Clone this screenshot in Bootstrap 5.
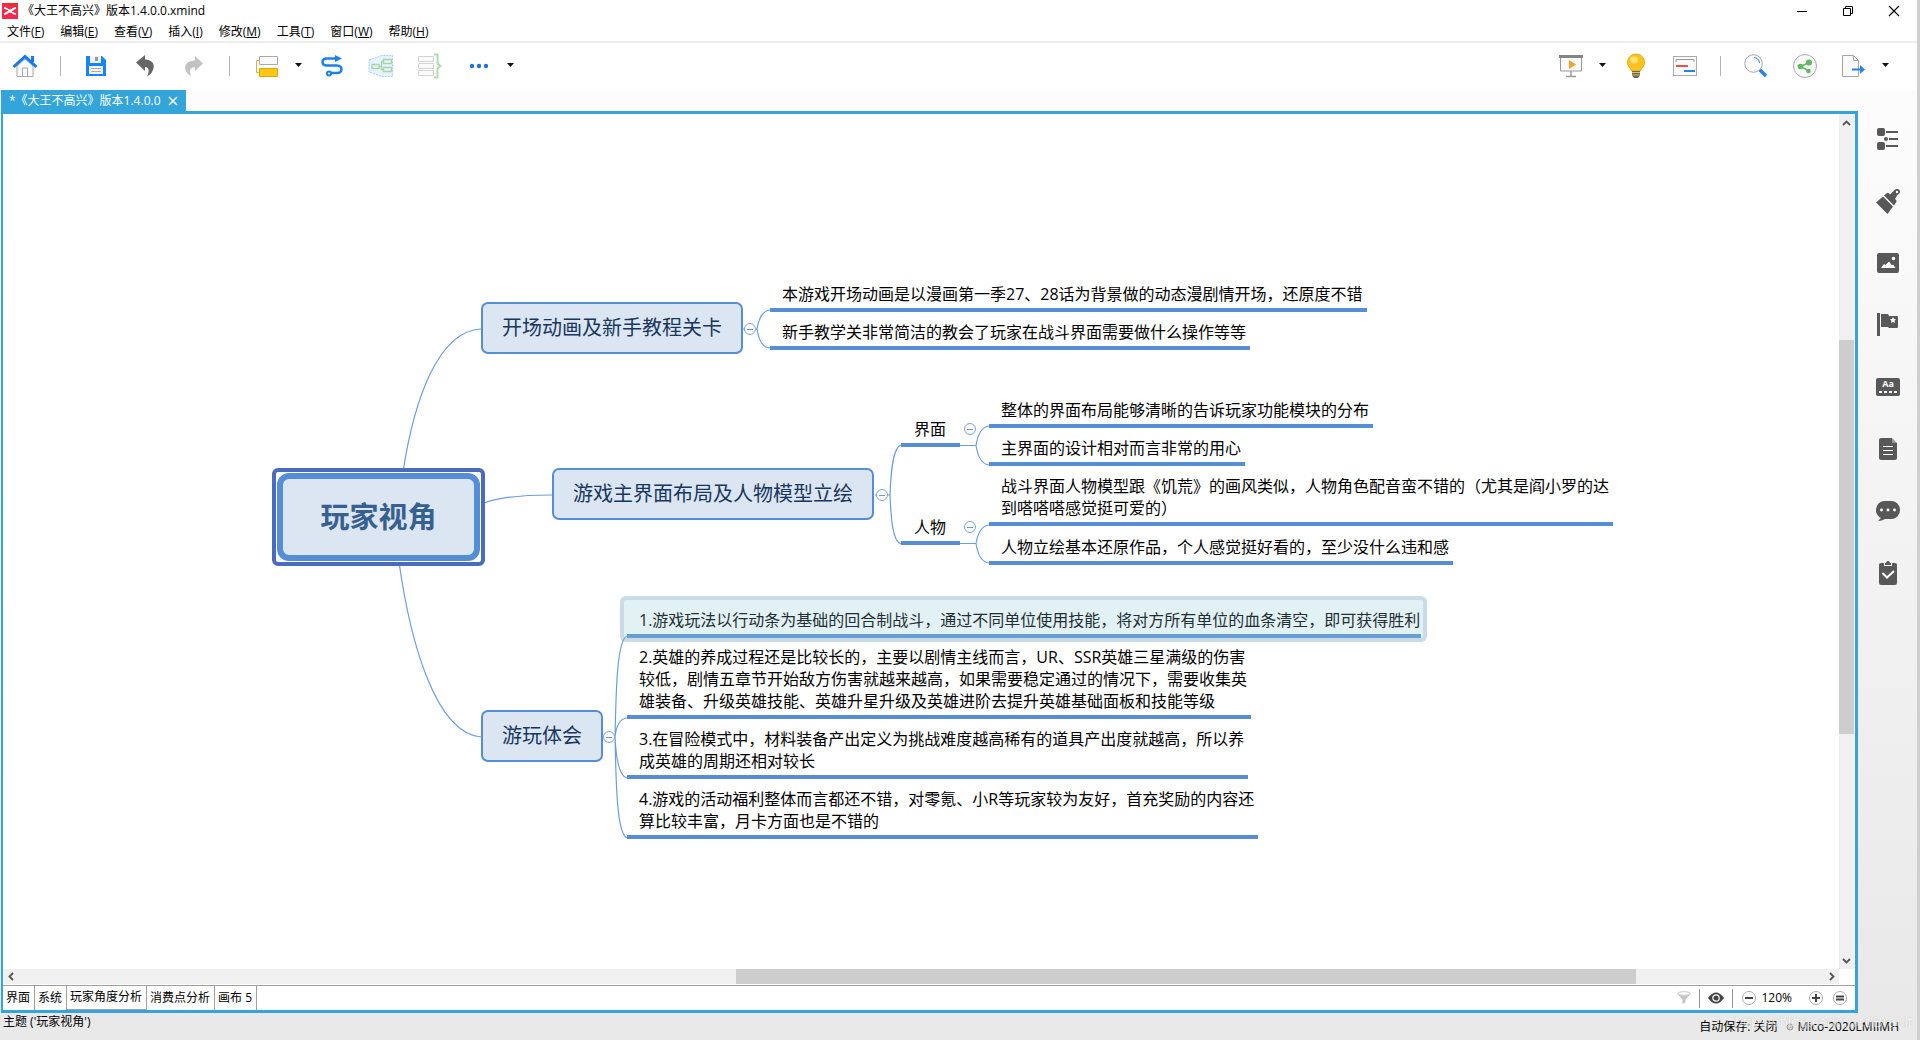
<!DOCTYPE html>
<html lang="zh-CN">
<head>
<meta charset="utf-8">
<meta name="viewport" content="width=device-width, initial-scale=1">
<title>《大王不高兴》版本1.4.0.0.xmind</title>
<link href="https://cdn.jsdelivr.net/npm/bootstrap@5.3.0/dist/css/bootstrap.min.css" rel="stylesheet">
<style>
:root { --accent: #33a5db; --line: #558ed5; --ink: #585858; }
body { font: 12px/18px "Open Sans", "Noto Sans CJK SC", sans-serif; color: #000; background: linear-gradient(#fff 0, #fcfcfc 100px, #e9e9e9 1000px); overflow: hidden; }
button { background: none; border: 0; padding: 0; color: inherit; display: flex; align-items: center; justify-content: center; }
svg { display: block; flex: none; }
.app-shell { height: 100vh; border-right: 3px solid #cfcfcf; }
.title-row { height: 22px; padding-left: 2px; background: #fff; }
.title-row h1 { font-size: 12px; line-height: 18px; }
.win-btn { width: 46px; height: 20px; }
.menu-row { height: 21px; gap: 16px; padding-left: 7px; background: #fff; border-bottom: 2px solid #ededed; }
.menu-row a { color: #000; text-decoration: none; }
.tool-row { height: 47px; background: #fff; padding: 0 23px 2px 0; }
.tool { width: 49px; height: 44px; }
.tool-split { margin-left: 2px; }
.caret { width: 16px; height: 44px; }
.rule { width: 22px; height: 20px; background: linear-gradient(#b4b4b4, #b4b4b4) center / 1px 100% no-repeat; }
.doc-tab { height: 21px; margin-left: 1px; width: 185px; padding: 0 8px; background: var(--accent); color: #fff; }
.editor { margin-left: 1px; border: 3px solid var(--accent); border-left-width: 2px; background: #fff; min-width: 0; }
.canvas { background: #fff; overflow: hidden; min-width: 0; }
.wires { left: 0; top: 0; }
.v-scroll { width: 15px; margin-right: 1px; background: #f0f0f0; }
.h-scroll { height: 15px; margin-bottom: 1px; background: #f0f0f0; margin-right: 16px; }
.arrow-btn { width: 15px; height: 17px; color: #555; }
.thumb { background: #cdcdcd; }
.sheet-row { height: 25px; border-top: 1px solid #a0a0a0; }
.sheet { height: 24px; padding: 0 4px 0 3px; border-right: 1px solid #a0a0a0; }
.sheet.active { margin-top: -1px; border-bottom: 1px solid #a0a0a0; background: #fff; }
.sheet-div { width: 1px; height: 19px; background: #909090; }
.zoom-tools { padding-right: 7px; }
.side-bar { width: 59px; padding-top: 18px; color: var(--ink); }
.side-bar button { width: 59px; height: 62px; }
.status-row { height: 27px; background: #e9e9e9; padding: 0 18px 0 3px; }
.watermark { right: 5px; bottom: 8px; font: 15px/20px "Liberation Sans", sans-serif; color: #fff; opacity: .55; text-shadow: 0 0 1px #888; pointer-events: none; }
/* mind map */
.topic { position: absolute; margin-top: -1px; font-size: 16px; line-height: 22px; padding: 0 4px 3px 12px; border-bottom: 4px solid var(--line); white-space: nowrap; }
.topic.leafless { padding-left: 13px; padding-right: 14px; }
.topic.picked { color: #222e33; isolation: isolate; padding-right: 1px; }
.topic.picked::before { content: ""; position: absolute; inset: -13px -6px -8px -7px; border: 4px solid rgba(120, 165, 195, .4); border-radius: 6px; background: rgba(150, 205, 215, .28) padding-box; z-index: -1; }
.branch { position: absolute; font-size: 20px; line-height: 24px; padding: 12px 19px; border: 2px solid var(--line); border-radius: 7px; background: #dce6f2; color: #17375e; white-space: nowrap; }
.root-topic { position: absolute; width: 203px; height: 88px; border: 6px solid var(--line); border-radius: 12px; background: #dce6f2; color: #376092; font-size: 29px; line-height: 40px; font-weight: 700; }
.root-topic::after { content: ""; position: absolute; inset: -11px; border: 4px solid #4a6cbd; border-radius: 6px; }
.fold { position: absolute; width: 12px; height: 12px; border: 1px solid #7ba5dd; border-radius: 50%; background: #fff; }
.fold::before { content: ""; width: 6px; height: 1px; background: #7b95bd; }
</style>
<script src="https://cdn.jsdelivr.net/npm/bootstrap@5.3.0/dist/js/bootstrap.bundle.min.js"></script>
</head>
<body>
<div class="app-shell d-flex flex-column">
  <header>
    <div class="title-row d-flex align-items-center">
      <svg width="16" height="16" viewBox="0 0 16 16"><rect width="16" height="16" fill="#f8274c"/><path d="M0 0h16v5z" fill="#e8302f"/><path d="M2 4c3 0 4 2.500 6 2.500S11 4 14 4v2c-2 0-2.500 2-4 2s2 2 4 2v2c-3 0-4-2.500-6-2.500S5 12 2 12v-2c2 0 2.500-2 4-2S4 6 2 6z" fill="#fff"/></svg>
      <h1 class="m-0 ms-1 fw-normal flex-grow-1">《大王不高兴》版本1.4.0.0.xmind</h1>
      <button class="win-btn" aria-label="最小化"><svg width="12" height="12"><path d="M1 6.500h10" stroke="#000"/></svg></button>
      <button class="win-btn" aria-label="还原"><svg width="12" height="12" fill="none" stroke="#000"><path d="M1.500 3.500h7v7h-7zM3.500 3.500v-2h7v7h-2"/></svg></button>
      <button class="win-btn" aria-label="关闭"><svg width="12" height="12"><path d="M1 1l10 10M11 1L1 11" stroke="#000" stroke-width="1.200"/></svg></button>
    </div>
    <nav class="menu-row d-flex align-items-center">
      <a href="#">文件(<u>F</u>)</a><a href="#">编辑(<u>E</u>)</a><a href="#">查看(<u>V</u>)</a><a href="#">插入(<u>I</u>)</a><a href="#">修改(<u>M</u>)</a><a href="#">工具(<u>T</u>)</a><a href="#">窗口(<u>W</u>)</a><a href="#">帮助(<u>H</u>)</a>
    </nav>
    <div class="tool-row d-flex align-items-center">
      <button class="tool" aria-label="主页"><svg width="26" height="24" viewBox="0 0 26 24"><path d="M5 12v10.500h16V12L13 5z" fill="#fafafa" stroke="#a8a8a8"/><path d="M10.500 22v-8h5v8" fill="none" stroke="#a8a8a8"/><path d="M19 2h3v6h-3z" fill="#1679e8"/><path d="M1.500 13L13 2.500 24.500 13" fill="none" stroke="#1679e8" stroke-width="3"/></svg></button>
      <span class="rule"></span>
      <button class="tool" aria-label="保存"><svg width="22" height="22" viewBox="0 0 22 22"><path d="M1 1h16l4 4v16H1z" fill="#1685f8"/><path d="M5 1h11v7H5z" fill="#f2f2f2"/><path d="M10 2h3v4h-3z" fill="#999"/><path d="M4 11h14v8H4z" fill="#f5f5f5"/><path d="M6 13.500h10M6 16.500h10" stroke="#aaa"/></svg></button>
      <button class="tool" aria-label="撤销"><svg width="22" height="24" viewBox="0 0 22 24"><path d="M2 8.500L11 1v4.500c7 0 11 5 7.500 11.500-1 2.500-3 4-5.500 5.500 2.500-5 2.500-9-2-9.500V17z" fill="#666"/></svg></button>
      <button class="tool" aria-label="重做"><svg width="22" height="24" viewBox="0 0 22 24"><path d="M20 9.500L12 2v4.500C5 6.500 0 11 3 17c1 2.500 3 4 5 5-2-5-1-8.500 4-9V17z" fill="#c3c3c3"/></svg></button>
      <span class="rule"></span>
      <button class="tool tool-split" aria-label="主题"><svg width="24" height="24" viewBox="0 0 24 24"><path d="M5 6.500H1.500v12H5" fill="none" stroke="#e0b030"/><path d="M4.500 2.500h18v8h-18z" fill="#fafafa" stroke="#aaa"/><path d="M4.500 14.500h18v8h-18z" fill="#fdc716" stroke="#dca90c"/></svg></button>
      <button class="caret" aria-label="主题选项"><svg width="8" height="5"><path d="M0 0h7L3.500 4z" fill="#111"/></svg></button>
      <button class="tool" aria-label="联系"><svg width="24" height="24" viewBox="0 0 24 24"><path d="M16 4.500H7c-6 0-6 7 0 7h10c6 0 6 7.500 0 7.500h-6" fill="none" stroke="#1b80e8" stroke-width="2.500"/><path d="M15 1l7 3.500L15 8z" fill="#1b80e8"/><circle cx="9" cy="19.500" r="2" fill="#fff" stroke="#1b80e8" stroke-width="2"/></svg></button>
      <button class="tool" aria-label="外框"><svg width="26" height="24" viewBox="0 0 26 24"><path d="M1 6L14 1.500h10.500v21H14L1 18z" fill="#e6f2fc" stroke="#a6cff5" stroke-dasharray="2 1"/><path d="M4 10.500h7v4H4zM15.500 5.500h8v4h-8zM15.500 13.500h8v4h-8zM11 12.500h2.500M15.500 7.500h-2v8h2" fill="none" stroke="#a9d3a9" stroke-width="1.300"/></svg></button>
      <button class="tool" aria-label="概要"><svg width="26" height="26" viewBox="0 0 26 26"><path d="M1.500 3.500h15v5h-15zM1.500 10.500h15v5h-15zM1.500 17.500h15v5h-15z" fill="#fafafa" stroke="#d4d4d4"/><path d="M17 1.500h3.500v9l3 2.500-3 2.500v9H17" fill="none" stroke="#b4dab3" stroke-width="2"/></svg></button>
      <button class="tool" aria-label="更多"><svg width="20" height="6" fill="#1b73e0"><circle cx="3" cy="3" r="2.200"/><circle cx="10" cy="3" r="2.200"/><circle cx="17" cy="3" r="2.200"/></svg></button>
      <button class="caret me-auto" aria-label="更多选项"><svg width="8" height="5"><path d="M0 0h7L3.500 4z" fill="#111"/></svg></button>

      <button class="tool" aria-label="演示"><svg width="26" height="24" viewBox="0 0 26 24"><path d="M2.500 3h21v14h-21z" fill="#fafafa" stroke="#999"/><path d="M1 1h24v3H1z" fill="#858585"/><path d="M13 17v5M8 22.500h10" stroke="#999" stroke-width="1.500"/><path d="M11 6l7 4.500-7 4.500z" fill="#f8a122"/></svg></button>
      <button class="caret" aria-label="演示选项"><svg width="8" height="5"><path d="M0 0h7L3.500 4z" fill="#111"/></svg></button>
      <button class="tool" aria-label="头脑风暴"><svg width="20" height="26" viewBox="0 0 20 26"><path d="M10 1a8.500 8.500 0 0 1 8.500 8.500c0 4-3 5-4 8.500h-9c-1-3.500-4-4.500-4-8.500A8.500 8.500 0 0 1 10 1z" fill="#fcc21d" stroke="#e4aa10"/><ellipse cx="8" cy="7" rx="4" ry="3.500" fill="#ffe070"/><path d="M6 18h8v4.500L12 25H8l-2-2.500z" fill="#666"/><path d="M6 19.500h8M6 22h8" stroke="#e0c060"/></svg></button>
      <button class="tool" aria-label="甘特图"><svg width="26" height="22" viewBox="0 0 26 22"><rect x="1.500" y="1.500" width="23" height="19" fill="#fafafa" stroke="#aaa"/><path d="M4 7V4.500h18V7" fill="none" stroke="#999"/><path d="M4 11h12" stroke="#ef5145" stroke-width="2"/><path d="M12 16h11" stroke="#2483e8" stroke-width="2"/></svg></button>
      <span class="rule"></span>
      <button class="tool" aria-label="查找"><svg width="26" height="26" viewBox="0 0 26 26"><path d="M16.500 16.500L23 23" stroke="#2483ec" stroke-width="3.500"/><circle cx="10.500" cy="10.500" r="8.800" fill="#fafafa" stroke="#a8a8a8"/><path d="M11 4.500c3 0 5.500 2.500 5.500 5.500" fill="none" stroke="#2483ec"/></svg></button>
      <button class="tool" aria-label="分享"><svg width="26" height="26" viewBox="0 0 26 26"><circle cx="13" cy="13" r="11.500" fill="#fafafa" stroke="#aaa"/><path d="M17 9.500L8.500 13.500 17 18" fill="none" stroke="#60b95a" stroke-width="1.500"/><g fill="#60b95a"><circle cx="17" cy="9.500" r="3"/><circle cx="8.500" cy="13.500" r="2.800"/><circle cx="16.500" cy="18" r="2.300"/></g></svg></button>
      <button class="tool" aria-label="导出"><svg width="26" height="24" viewBox="0 0 26 24"><path d="M1.500 1.500h11l5 5v16h-16z" fill="#fafafa" stroke="#a5a5a5"/><path d="M12.500 1.500v5h5" fill="none" stroke="#a5a5a5"/><path d="M11 15.500h9" stroke="#2483ec" stroke-width="2"/><path d="M19 11l5 4.500-5 4.500z" fill="#2483ec"/></svg></button>
      <button class="caret" aria-label="导出选项"><svg width="8" height="5"><path d="M0 0h7L3.500 4z" fill="#111"/></svg></button>
    </div>
  </header>

  <main class="d-flex flex-grow-1" style="min-height:0">
    <div class="d-flex flex-column flex-grow-1" style="min-width:0">
      <div class="doc-tab d-flex align-items-center justify-content-between">
        <span class="text-nowrap">*《大王不高兴》版本1.4.0.0</span>
        <button aria-label="关闭标签"><svg width="10" height="10"><path d="M1 1l8 8M9 1L1 9" stroke="#fff" stroke-width="1.500"/></svg></button>
      </div>
      <section class="editor d-flex flex-column flex-grow-1">
        <div class="d-flex flex-grow-1">
          <div class="canvas position-relative flex-grow-1">
            <svg class="wires position-absolute" width="1836" height="856" viewBox="3 114 1836 856" fill="none" stroke="#6c9edb" stroke-width="1.200">
              <path d="M403 472C414 400 438 331 481 329M484 503C500 497 525 495 552 495M399 562C410 640 435 733 481 737"/>
              <path d="M743 329H757M770 310Q760 311 757 329Q760 348 770 348"/>
              <path d="M875 495H890M901 445C893 447 891 470 890 495C891 520 893 542 901 544"/>
              <path d="M960 445.500H976M989 426Q979 427 976 445.500Q979 464 989 465"/>
              <path d="M960 543.500H976M989 525Q979 526 976 543.500Q979 562 989 563"/>
              <path d="M600 737H615M627 636C617 640 616 690 615 737C616 785 617 834 627 838M627 718Q617 719 615 737Q617 776 627 778"/>
            </svg>
            <div class="root-topic d-flex align-items-center justify-content-center" style="left:274px;top:359px">玩家视角</div>

            <div class="branch" style="left:478px;top:188px">开场动画及新手教程关卡</div>
            <button class="fold" style="left:741px;top:209px" aria-label="折叠"></button>
            <div class="topic" style="left:767px;top:170px">本游戏开场动画是以漫画第一季27、28话为背景做的动态漫剧情开场，还原度不错</div>
            <div class="topic" style="left:767px;top:208px">新手教学关非常简洁的教会了玩家在战斗界面需要做什么操作等等</div>

            <div class="branch" style="left:549px;top:354px">游戏主界面布局及人物模型立绘</div>
            <button class="fold" style="left:873px;top:375px" aria-label="折叠"></button>
            <div class="topic leafless" style="left:898px;top:305px">界面</div>
            <button class="fold" style="left:961px;top:309px" aria-label="折叠"></button>
            <div class="topic" style="left:986px;top:286px">整体的界面布局能够清晰的告诉玩家功能模块的分布</div>
            <div class="topic" style="left:986px;top:324px">主界面的设计相对而言非常的用心</div>
            <div class="topic leafless" style="left:898px;top:403px">人物</div>
            <button class="fold" style="left:961px;top:407px" aria-label="折叠"></button>
            <div class="topic" style="left:986px;top:362px">战斗界面人物模型跟《饥荒》的画风类似，人物角色配音蛮不错的（尤其是阎小罗的达<br>到嗒嗒嗒感觉挺可爱的）</div>
            <div class="topic" style="left:986px;top:423px">人物立绘基本还原作品，个人感觉挺好看的，至少没什么违和感</div>

            <div class="branch" style="left:478px;top:596px">游玩体会</div>
            <button class="fold" style="left:600px;top:617px" aria-label="折叠"></button>
            <div class="topic picked" style="left:624px;top:496px">1.游戏玩法以行动条为基础的回合制战斗，通过不同单位使用技能，将对方所有单位的血条清空，即可获得胜利</div>
            <div class="topic" style="left:624px;top:533px">2.英雄的养成过程还是比较长的，主要以剧情主线而言，UR、SSR英雄三星满级的伤害<br>较低，剧情五章节开始敌方伤害就越来越高，如果需要稳定通过的情况下，需要收集英<br>雄装备、升级英雄技能、英雄升星升级及英雄进阶去提升英雄基础面板和技能等级</div>
            <div class="topic" style="left:624px;top:615px">3.在冒险模式中，材料装备产出定义为挑战难度越高稀有的道具产出度就越高，所以养<br>成英雄的周期还相对较长</div>
            <div class="topic" style="left:624px;top:675px">4.游戏的活动福利整体而言都还不错，对零氪、小R等玩家较为友好，首充奖励的内容还<br>算比较丰富，月卡方面也是不错的</div>
          </div>
          <div class="v-scroll d-flex flex-column">
            <button class="arrow-btn" aria-label="向上滚动"><svg width="9" height="6"><path d="M1 5l3.500-3.500L8 5" fill="none" stroke="currentColor" stroke-width="1.800"/></svg></button>
            <div style="flex:209"></div><div class="thumb" style="flex:395"></div><div style="flex:218"></div>
            <button class="arrow-btn" aria-label="向下滚动"><svg width="9" height="6"><path d="M1 1l3.500 3.500L8 1" fill="none" stroke="currentColor" stroke-width="1.800"/></svg></button>
          </div>
        </div>
        <div class="h-scroll d-flex">
          <button class="arrow-btn h-100" aria-label="向左滚动"><svg width="6" height="9"><path d="M5 1L1.500 4.500 5 8" fill="none" stroke="currentColor" stroke-width="1.800"/></svg></button>
          <div style="flex:718"></div><div class="thumb" style="flex:900"></div><div style="flex:188"></div>
          <button class="arrow-btn h-100" aria-label="向右滚动"><svg width="6" height="9"><path d="M1 1l3.500 3.500L1 8" fill="none" stroke="currentColor" stroke-width="1.800"/></svg></button>
        </div>
        <div class="sheet-row d-flex align-items-center">
          <button class="sheet">界面</button><button class="sheet">系统</button><button class="sheet active">玩家角度分析</button><button class="sheet">消费点分析</button><button class="sheet">画布 5</button>
          <div class="zoom-tools d-flex align-items-center ms-auto">
            <button class="me-2" aria-label="筛选"><svg width="14" height="14"><ellipse cx="7" cy="2.500" rx="6.300" ry="1.800" fill="#fff" stroke="#c4c4c4"/><path d="M1 3.500l4.500 5V13L8.500 11.500v-3L13 3.500Q7 6 1 3.500z" fill="#c4c4c4"/></svg></button>
            <span class="sheet-div"></span>
            <button class="mx-2" aria-label="预览"><svg width="16" height="12"><path d="M0 6Q8-5 16 6 8 17 0 6z" fill="#444"/><circle cx="8" cy="6" r="3.200" fill="none" stroke="#fff" stroke-width="1.200"/></svg></button>
            <span class="sheet-div"></span>
            <button class="ms-2 me-1" aria-label="缩小"><svg width="16" height="16"><circle cx="8" cy="8" r="6.500" fill="#fff" stroke="#aaa"/><path d="M4 8h8" stroke="#444" stroke-width="2"/></svg></button>
            <span>120%</span>
            <button class="ms-3 me-2" aria-label="放大"><svg width="16" height="16"><circle cx="8" cy="8" r="6.500" fill="#fff" stroke="#aaa"/><path d="M4 8h8M8 4v8" stroke="#444" stroke-width="2"/></svg></button>
            <button aria-label="实际大小"><svg width="16" height="16"><circle cx="8" cy="8" r="6.500" fill="#fff" stroke="#aaa"/><path d="M4 6.500h8M4 9.500h8" stroke="#444" stroke-width="2"/></svg></button>
          </div>
        </div>
      </section>
    </div>
    <aside class="side-bar d-flex flex-column">
      <button aria-label="大纲"><svg width="22" height="24" fill="currentColor"><rect x="0" y="1" width="8" height="8" rx="2"/><rect x="0" y="15" width="8" height="8" rx="2"/><circle cx="9" cy="12" r="2"/><path d="M9 4h12v2H9zM12 11h9v2h-9zM9 18h12v2H9z"/></svg></button>
      <button aria-label="格式"><svg width="26" height="26" viewBox="0 0 26 26" fill="currentColor"><path d="M1 14.500L8 8.500l10 10L12.500 26z"/><path d="M9 7.500l3-2.500c1.500-.5 2 .5 3 1.500L19 2.500C20 .500 25 0 25 3.500c0 2-1.500 2.500-2.500 3.500L20 11c1.500 1 2 2.500 1 3.500L19 17.500z"/><circle cx="22" cy="4" r="1.200" fill="#fff"/></svg></button>
      <button aria-label="图像"><svg width="22" height="20" fill="currentColor"><rect width="22" height="20" rx="2"/><path d="M4 15l3-4 1.500 1L12 8.500l3 4 1-1 2.500 3.500z" fill="#fff"/><circle cx="16.500" cy="5.500" r="1.700" fill="#fff"/></svg></button>
      <button aria-label="图标"><svg width="22" height="24" fill="currentColor"><path d="M0 0h3v23H0zM4 1h7l1 2h8q1 0 1 1v10q0 1-1 1h-8l-1-1H4z"/><path d="M16 4l1 2 2 .3-1.500 1.500.5 2.200-2-1-2 1 .5-2.200L13 6.300l2-.3z" fill="#fff"/></svg></button>
      <button aria-label="标签"><svg width="24" height="18" fill="currentColor"><rect width="24" height="18" rx="2"/><text x="12" y="9" fill="#fff" font-size="9" font-weight="700" text-anchor="middle">Aa</text><path d="M3 14h18" stroke="#fff" stroke-width="2" stroke-dasharray="3 2"/></svg></button>
      <button aria-label="备注"><svg width="18" height="22" fill="currentColor"><path d="M2 0h11v5h5v15q0 2-2 2H2q-2 0-2-2V2Q0 0 2 0z"/><path d="M13 0l5 5h-5z" fill="#999"/><path d="M4 8.500h10M4 12.500h10M4 16.500h10" stroke="#fff"/></svg></button>
      <button aria-label="批注"><svg width="24" height="20" fill="currentColor"><path d="M8 0h8a8 9 0 0 1 0 18H9q-3 2-7 2l3-3A9 9 0 0 1 8 0z"/><g fill="#fff"><circle cx="5.500" cy="9" r="1.400"/><circle cx="12" cy="9" r="1.400"/><circle cx="18.500" cy="9" r="1.400"/></g></svg></button>
      <button aria-label="任务"><svg width="18" height="24" fill="currentColor"><path d="M2 2h3v3h8V2h3q2 0 2 2v18q0 2-2 2H2q-2 0-2-2V4q0-2 2-2z"/><path d="M6 2h1q0-2 2-2t2 2h1v2H6z"/><path d="M3.500 12l4.500 4.500 7-6.500" fill="none" stroke="#fff" stroke-width="2"/></svg></button>
    </aside>
  </main>

  <footer class="status-row d-flex align-items-center position-relative">
    <span class="me-auto align-self-start">主题 ('玩家视角')</span>
    <span class="me-2">自动保存: 关闭</span>
    <svg class="me-1" width="8" height="8"><circle cx="4" cy="4" r="3" fill="#ccc" stroke="#999"/></svg>
    <span>Mico-2020LMIIMH</span>
    <span class="watermark position-absolute">https://blog.csdn.net/Brault</span>
  </footer>
</div>
</body>
</html>
